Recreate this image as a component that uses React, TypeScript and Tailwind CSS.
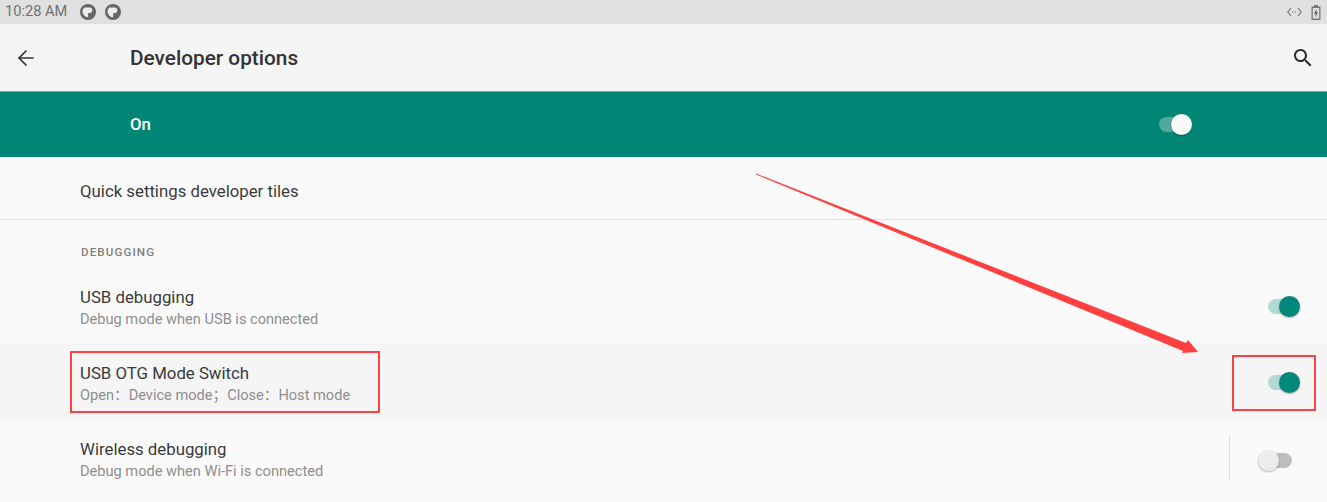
import { ArrowLeft } from "lucide-react";

function StatusDot() {
  return (
    <svg width="16" height="16" viewBox="0 0 16 16">
      <circle cx="8" cy="8" r="8" fill="#666" />
      <path d="M4.5 3.4h5a2.8 2.8 0 0 1 0 5.6H8.2v4.2A5.6 5.6 0 0 1 4.5 3.4z" fill="#ececec" />
    </svg>
  );
}

function Toggle({ state }: { state: "on" | "off" | "light" }) {
  if (state === "light") {
    return (
      <div className="relative w-[33px] h-[15px] rounded-full bg-[#4fa99d]">
        <div className="absolute right-0 -top-[3px] w-[21px] h-[21px] rounded-full bg-[#fafafa] shadow-[0_1px_2px_rgba(0,0,0,0.3)]" />
      </div>
    );
  }
  if (state === "on") {
    return (
      <div className="relative w-[32px] h-[15px] rounded-full bg-[#b2d9d4]">
        <div className="absolute right-0 -top-[3px] w-[21px] h-[21px] rounded-full bg-[#00897b] shadow-[0_1px_2px_rgba(0,0,0,0.3)]" />
      </div>
    );
  }
  return (
    <div className="mt-[4px] relative w-[34px] h-[15px] rounded-full bg-[#bdbdbd]">
      <div className="absolute left-0 -top-[3px] w-[21px] h-[21px] rounded-full bg-[#ececec] shadow-[0_1px_2px_rgba(0,0,0,0.3)]" />
    </div>
  );
}

function Row({ title, summary, className, children }: { title: string; summary: string; className: string; children: React.ReactNode }) {
  return (
    <div className={`flex items-center justify-between pl-20 pr-[27px] ${className}`}>
      <div className="flex flex-col gap-px pt-[3px]">
        <span className="text-[16.8px] leading-[22px] text-[#3a3a3a]">{title}</span>
        <span className="text-[14.6px] leading-[20px] text-[#8e8e8e]">{summary}</span>
      </div>
      {children}
    </div>
  );
}

export default function App() {
  return (
    <div className="relative w-[1327px] h-[502px] overflow-hidden bg-[#fafafa] font-['Roboto','Noto_Sans_CJK_SC',sans-serif]">
      {/* status bar */}
      <div className="h-6 bg-[#e0e0e0] flex items-center justify-between pl-[5px] pr-[6px]">
        <div className="flex items-center">
          <span className="text-[14.6px] text-[#707070]">10:28 AM</span>
          <div className="flex items-center gap-[9px] ml-[13px]">
            <StatusDot />
            <StatusDot />
          </div>
        </div>
        <div className="flex items-center gap-[9px]">
          <svg width="15" height="10" viewBox="0 0 15 10" fill="none" stroke="#777" strokeWidth="1.2">
            <path d="M4 1 .8 5 4 9" />
            <path d="M11 1l3.2 4L11 9" />
            <path d="M5 5h5" strokeDasharray="1.4 1.2" />
          </svg>
          <svg width="10" height="15" viewBox="0 0 10 15">
            <path d="M3 0h4v1.5h2.5V15H.5V1.5H3z" fill="#777" />
            <path d="M1.8 3h6.4v10.6H1.8z" fill="#e0e0e0" />
            <path d="M5.8 4 3 8.6h1.7l-.5 3.6L7 7.4H5.3z" fill="#555" />
          </svg>
        </div>
      </div>

      {/* toolbar */}
      <div className="h-[67px] bg-[#f5f5f5] flex items-center justify-between pl-[14px] pr-3">
        <div className="flex items-center">
          <ArrowLeft size={24} strokeWidth={1.7} className="text-[#333]" />
          <h1 className="ml-[92px] pt-[2px] text-[20.8px] font-medium text-[#333]">Developer options</h1>
        </div>
        <svg width="24" height="24" viewBox="0 0 24 24" fill="#2b2b2b">
          <path d="M15.5 14h-.79l-.28-.27C15.41 12.59 16 11.11 16 9.5 16 5.91 13.09 3 9.5 3S3 5.91 3 9.5 5.91 16 9.5 16c1.61 0 3.09-.59 4.23-1.57l.27.28v.79l5 4.99L20.49 19l-4.99-5zm-6 0C7.01 14 5 11.99 5 9.5S7.01 5 9.5 5 14 7.01 14 9.5 11.99 14 9.5 14z" />
        </svg>
      </div>

      {/* master switch */}
      <div className="h-[66px] bg-[#018675] flex items-center justify-between pl-[130px] pr-[135px] border-t border-[#5fb3a8]">
        <span className="text-[16.8px] font-medium text-white">On</span>
        <Toggle state="light" />
      </div>

      <div className="h-[63px] flex items-center pl-20 pt-[7px] border-b border-[#e0e0e0]">
        <span className="text-[16.8px] text-[#3a3a3a]">Quick settings developer tiles</span>
      </div>

      <div className="h-[48px] pl-[81px] pt-[25px] text-[11.6px] leading-[14px] font-medium tracking-[1.1px] text-[#808080]">DEBUGGING</div>

      <Row title="USB debugging" summary="Debug mode when USB is connected" className="h-[76px]">
        <Toggle state="on" />
      </Row>
      <Row title="USB OTG Mode Switch" summary="Open：Device mode；Close：Host mode" className="h-[76px] bg-[#f5f5f5]">
        <Toggle state="on" />
      </Row>
      <Row title="Wireless debugging" summary="Debug mode when Wi-Fi is connected" className="h-[82px] pb-[6px]">
        <div className="flex items-center pr-[8px]">
          <div className="w-px h-[44px] bg-[#dcdcdc] mr-[28px]" />
          <Toggle state="off" />
        </div>
      </Row>

      {/* annotations drawn over the screenshot */}
      <div className="absolute left-[70px] top-[351px] w-[310px] h-[62px] border-2 border-[#ff4040]" />
      <div className="absolute left-[1232px] top-[355px] w-[84px] h-[56px] border-2 border-[#ff4040]" />
      <svg className="absolute inset-0 pointer-events-none" width="1327" height="502" viewBox="0 0 1327 502">
        <polygon points="756,173.5 1186,343 1188,340 1198,352 1182,353 1183,351 756,174.5" fill="#ff4040" />
      </svg>
    </div>
  );
}
